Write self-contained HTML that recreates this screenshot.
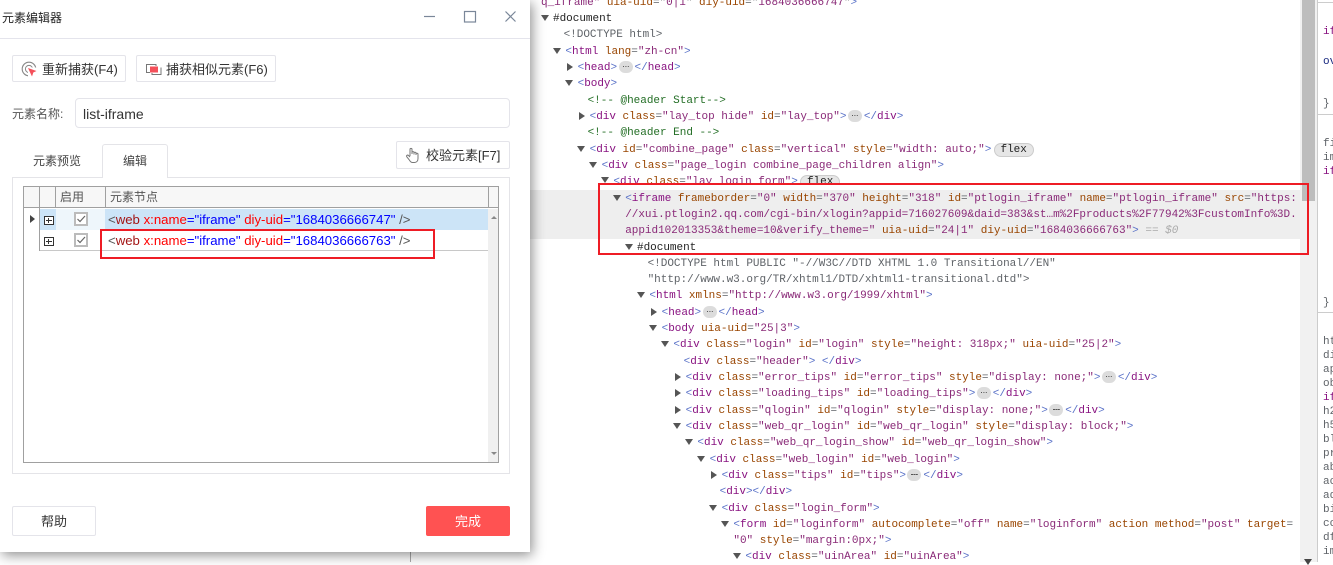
<!DOCTYPE html>
<html lang="zh-CN"><head><meta charset="utf-8"><title>元素编辑器</title>
<style>
html,body{margin:0;padding:0;background:#fff}
body{position:relative;width:1333px;height:562px;overflow:hidden;font-family:"Liberation Sans","Noto Sans CJK SC",sans-serif;color:#333}
.a{position:absolute;box-sizing:border-box}
.m{position:absolute;margin-top:1px;font:11px/16px "Liberation Mono",monospace;letter-spacing:-.018px;white-space:pre;color:#5f6368}
.m i{font-style:normal;color:#5a72c8}
.m b{font-weight:normal;color:#881280}
.m u{text-decoration:none;color:#994500}
.m s{text-decoration:none;color:#8a2a78}
.m em{font-style:normal;color:#236e25}
.p{display:inline-block;width:14px;height:12px;margin:0 2px 0 1.4px;border-radius:6px;background:#dcdcdc;border:0;vertical-align:-3px;position:relative}
.p:after{content:"";position:absolute;left:4px;top:5px;width:1.4px;height:1.4px;background:#555;box-shadow:2.4px 0 #555,4.8px 0 #555}
.f{display:inline-block;width:40px;height:14px;line-height:13px;margin-left:2.4px;border-radius:7px;background:#e6e6e6;border:1px solid #ccc;box-sizing:border-box;text-align:center;color:#222;vertical-align:0}
.d{position:absolute;width:0;height:0;border-left:4px solid transparent;border-right:4px solid transparent;border-top:6px solid #555}
.r{position:absolute;width:0;height:0;border-top:4px solid transparent;border-bottom:4px solid transparent;border-left:6px solid #555}
.t{position:absolute;white-space:nowrap;line-height:18px}
.btn{position:absolute;box-sizing:border-box;background:#fff;border:1px solid #e4e4ea;border-radius:2px}
.rt{position:absolute;margin-top:1px;left:1323px;font:11px/14px "Liberation Mono",monospace;color:#5f6368;white-space:pre}
.c{position:absolute;left:74px;width:14px;height:14px;border:2px solid #bbb;box-sizing:border-box;background:#fff}
.e{position:absolute;left:44px;width:10px;height:9px;box-sizing:border-box;border:1px solid #333;background:#fff}
.e:before{content:"";position:absolute;left:1px;right:1px;top:3px;height:1px;background:#333}
.e:after{content:"";position:absolute;top:1px;bottom:1px;left:3px;width:1px;background:#333}
.x{position:absolute;left:108px;font-size:13.2px;line-height:18px;white-space:pre;color:#555}
.x b{font-weight:normal;color:#a31515}.x u{text-decoration:none;color:#f00}.x s{text-decoration:none;color:#00f}
</style></head><body>

<div class="a" style="left:530px;top:190px;width:770px;height:49px;background:#eee"></div>

<div class="m" style="left:541px;top:-6px"><s>q_iframe"</s> <u>uia-uid</u>="<s>0|1</s>" <u>diy-uid</u>="<s>1684036666747</s>"<i>&gt;</i></div>
<div class="m" style="left:553px;top:10px;color:#222">#document</div>
<div class="m" style="left:563.6px;top:26px">&lt;!DOCTYPE html&gt;</div>
<div class="m" style="left:565.4px;top:43px"><i>&lt;</i><b>html</b> <u>lang</u>=<s>"zh-cn"</s><i>&gt;</i></div>
<div class="m" style="left:577.6px;top:59px"><i>&lt;</i><b>head</b><i>&gt;</i><span class="p"></span><i>&lt;/</i><b>head</b><i>&gt;</i></div>
<div class="m" style="left:577.6px;top:75px"><i>&lt;</i><b>body</b><i>&gt;</i></div>
<div class="m" style="left:587.6px;top:92px"><em>&lt;!-- @header Start--&gt;</em></div>
<div class="m" style="left:589.6px;top:108px"><i>&lt;</i><b>div</b> <u>class</u>=<s>"lay_top hide"</s> <u>id</u>=<s>"lay_top"</s><i>&gt;</i><span class="p"></span><i>&lt;/</i><b>div</b><i>&gt;</i></div>
<div class="m" style="left:587.6px;top:124px"><em>&lt;!-- @header End --&gt;</em></div>
<div class="m" style="left:589.6px;top:141px"><i>&lt;</i><b>div</b> <u>id</u>=<s>"combine_page"</s> <u>class</u>=<s>"vertical"</s> <u>style</u>=<s>"width: auto;"</s><i>&gt;</i><span class="f">flex</span></div>
<div class="m" style="left:601.6px;top:157px"><i>&lt;</i><b>div</b> <u>class</u>=<s>"page_login combine_page_children align"</s><i>&gt;</i></div>
<div class="m" style="left:613.4px;top:173px"><i>&lt;</i><b>div</b> <u>class</u>=<s>"lay_login_form"</s><i>&gt;</i><span class="f">flex</span></div>
<div class="a" style="left:600px;top:184px;width:700px;height:6px;background:#fff"></div>
<div class="m" style="left:625.2px;top:190px"><i>&lt;</i><b>iframe</b> <u>frameborder</u>=<s>"0"</s> <u>width</u>=<s>"370"</s> <u>height</u>=<s>"318"</s> <u>id</u>=<s>"ptlogin_iframe"</s> <u>name</u>=<s>"ptlogin_iframe"</s> <u>src</u>=<s>"https:</s></div>
<div class="m" style="left:625.2px;top:206px"><s>//xui.ptlogin2.qq.com/cgi-bin/xlogin?appid=716027609&amp;daid=383&amp;st…m%2Fproducts%2F77942%3FcustomInfo%3D.</s></div>
<div class="m" style="left:625.2px;top:222px"><s>appid102013353&amp;theme=10&amp;verify_theme="</s> <u>uia-uid</u>=<s>"24|1"</s> <u>diy-uid</u>=<s>"1684036666763"</s><i>&gt;</i> <span style="color:#aaa;font-style:italic">== $0</span></div>
<div class="m" style="left:637px;top:239px;color:#222">#document</div>
<div class="m" style="left:647.6px;top:255px">&lt;!DOCTYPE html PUBLIC "-//W3C//DTD XHTML 1.0 Transitional//EN"</div>
<div class="m" style="left:647.6px;top:271px">"http://www.w3.org/TR/xhtml1/DTD/xhtml1-transitional.dtd"&gt;</div>
<div class="m" style="left:649.4px;top:287px"><i>&lt;</i><b>html</b> <u>xmlns</u>=<s>"http://www.w3.org/1999/xhtml"</s><i>&gt;</i></div>
<div class="m" style="left:661.6px;top:304px"><i>&lt;</i><b>head</b><i>&gt;</i><span class="p"></span><i>&lt;/</i><b>head</b><i>&gt;</i></div>
<div class="m" style="left:661.6px;top:320px"><i>&lt;</i><b>body</b> <u>uia-uid</u>=<s>"25|3"</s><i>&gt;</i></div>
<div class="m" style="left:673.4px;top:336px"><i>&lt;</i><b>div</b> <u>class</u>=<s>"login"</s> <u>id</u>=<s>"login"</s> <u>style</u>=<s>"height: 318px;"</s> <u>uia-uid</u>=<s>"25|2"</s><i>&gt;</i></div>
<div class="m" style="left:683.6px;top:353px"><i>&lt;</i><b>div</b> <u>class</u>=<s>"header"</s><i>&gt;</i> <i>&lt;/</i><b>div</b><i>&gt;</i></div>
<div class="m" style="left:685.6px;top:369px"><i>&lt;</i><b>div</b> <u>class</u>=<s>"error_tips"</s> <u>id</u>=<s>"error_tips"</s> <u>style</u>=<s>"display: none;"</s><i>&gt;</i><span class="p"></span><i>&lt;/</i><b>div</b><i>&gt;</i></div>
<div class="m" style="left:685.6px;top:385px"><i>&lt;</i><b>div</b> <u>class</u>=<s>"loading_tips"</s> <u>id</u>=<s>"loading_tips"</s><i>&gt;</i><span class="p"></span><i>&lt;/</i><b>div</b><i>&gt;</i></div>
<div class="m" style="left:685.6px;top:402px"><i>&lt;</i><b>div</b> <u>class</u>=<s>"qlogin"</s> <u>id</u>=<s>"qlogin"</s> <u>style</u>=<s>"display: none;"</s><i>&gt;</i><span class="p"></span><i>&lt;/</i><b>div</b><i>&gt;</i></div>
<div class="m" style="left:685.6px;top:418px"><i>&lt;</i><b>div</b> <u>class</u>=<s>"web_qr_login"</s> <u>id</u>=<s>"web_qr_login"</s> <u>style</u>=<s>"display: block;"</s><i>&gt;</i></div>
<div class="m" style="left:697.4px;top:434px"><i>&lt;</i><b>div</b> <u>class</u>=<s>"web_qr_login_show"</s> <u>id</u>=<s>"web_qr_login_show"</s><i>&gt;</i></div>
<div class="m" style="left:709.6px;top:451px"><i>&lt;</i><b>div</b> <u>class</u>=<s>"web_login"</s> <u>id</u>=<s>"web_login"</s><i>&gt;</i></div>
<div class="m" style="left:721.6px;top:467px"><i>&lt;</i><b>div</b> <u>class</u>=<s>"tips"</s> <u>id</u>=<s>"tips"</s><i>&gt;</i><span class="p"></span><i>&lt;/</i><b>div</b><i>&gt;</i></div>
<div class="m" style="left:719.6px;top:483px"><i>&lt;</i><b>div</b><i>&gt;&lt;/</i><b>div</b><i>&gt;</i></div>
<div class="m" style="left:721.6px;top:500px"><i>&lt;</i><b>div</b> <u>class</u>=<s>"login_form"</s><i>&gt;</i></div>
<div class="m" style="left:733.4px;top:516px"><i>&lt;</i><b>form</b> <u>id</u>=<s>"loginform"</s> <u>autocomplete</u>=<s>"off"</s> <u>name</u>=<s>"loginform"</s> <u>action</u> <u>method</u>=<s>"post"</s> <u>target</u>=</div>
<div class="m" style="left:733.4px;top:532px"><s>"0"</s> <u>style</u>=<s>"margin:0px;"</s><i>&gt;</i></div>
<div class="m" style="left:745.4px;top:548px"><i>&lt;</i><b>div</b> <u>class</u>=<s>"uinArea"</s> <u>id</u>=<s>"uinArea"</s><i>&gt;</i></div>

<div class="d" style="left:541px;top:15px"></div>
<div class="d" style="left:553px;top:48px"></div>
<div class="d" style="left:565px;top:80px"></div>
<div class="d" style="left:577px;top:146px"></div>
<div class="d" style="left:589px;top:162px"></div>
<div class="a" style="left:601px;top:177px;width:0;height:0;border-left:4px solid transparent;border-right:4px solid transparent;border-top:6px solid #555"></div>
<div class="d" style="left:613px;top:195px"></div>
<div class="d" style="left:625px;top:244px"></div>
<div class="d" style="left:637px;top:292px"></div>
<div class="d" style="left:649px;top:325px"></div>
<div class="d" style="left:661px;top:341px"></div>
<div class="d" style="left:673px;top:423px"></div>
<div class="d" style="left:685px;top:439px"></div>
<div class="d" style="left:697px;top:456px"></div>
<div class="d" style="left:709px;top:505px"></div>
<div class="d" style="left:721px;top:521px"></div>
<div class="d" style="left:733px;top:553px"></div>
<div class="r" style="left:567px;top:63px"></div>
<div class="r" style="left:579px;top:112px"></div>
<div class="r" style="left:651px;top:308px"></div>
<div class="r" style="left:675px;top:373px"></div>
<div class="r" style="left:675px;top:389px"></div>
<div class="r" style="left:675px;top:406px"></div>
<div class="r" style="left:711px;top:471px"></div>

<div class="a" style="left:1300px;top:0;width:17px;height:562px;background:#f1f1f1"></div>
<div class="a" style="left:1302px;top:0;width:13px;height:201px;background:#bdbdbd"></div>
<div class="d" style="left:1304px;top:559px;border-top-color:#444"></div>
<div class="a" style="left:1317px;top:0;width:1px;height:562px;background:#ccc"></div>
<div class="a" style="left:1318px;top:2px;width:15px;height:1px;background:#ccc"></div>
<div class="a" style="left:1318px;top:114px;width:15px;height:1px;background:#ccc"></div>
<div class="a" style="left:1318px;top:312px;width:15px;height:1px;background:#ccc"></div>
<div class="rt" style="top:24px;color:#881280">iframe</div>
<div class="rt" style="top:54px;color:#1a2a80">overflow</div>
<div class="rt" style="top:96px">}</div>
<div class="rt" style="top:136px">figure</div>
<div class="rt" style="top:150px">img</div>
<div class="rt" style="top:164px;color:#881280">iframe</div>
<div class="rt" style="top:295px">}</div>
<div class="rt" style="top:334px">html</div>
<div class="rt" style="top:348px">div</div>
<div class="rt" style="top:362px">applet</div>
<div class="rt" style="top:376px">object</div>
<div class="rt" style="top:390px;color:#881280">iframe</div>
<div class="rt" style="top:404px">h2</div>
<div class="rt" style="top:418px">h5</div>
<div class="rt" style="top:432px">blockquote</div>
<div class="rt" style="top:446px">pre</div>
<div class="rt" style="top:460px">abbr</div>
<div class="rt" style="top:474px">acronym</div>
<div class="rt" style="top:488px">address</div>
<div class="rt" style="top:502px">big</div>
<div class="rt" style="top:516px">code</div>
<div class="rt" style="top:530px">dfn</div>
<div class="rt" style="top:544px">img</div>

<div class="a" style="left:598px;top:183px;width:711px;height:72px;border:2px solid #ee1c25"></div>
<div class="a" style="left:410px;top:550px;width:1px;height:12px;background:#aaa"></div>

<!-- dialog -->
<div class="a" style="left:0;top:0;width:530px;height:552px;background:#fff;box-shadow:2px 3px 12px rgba(0,0,0,.45)">
<div class="t" style="left:2px;top:9px;font-size:12px;color:#222">元素编辑器</div>
<div class="a" style="left:0;top:38px;width:530px;height:1px;background:#e4e4ec"></div>
<svg class="a" style="left:420px;top:5px" width="100" height="22" fill="none" stroke="#7a8799" stroke-width="1.2"><path d="M4 11.5H15"/><rect x="44.5" y="6.5" width="11" height="10.5"/><path d="M85.500 6.500L95.500 16.500M95.500 6.500L85.500 16.500"/></svg>

<div class="btn" style="left:12px;top:55px;width:114px;height:27px"></div>
<svg class="a" style="left:21px;top:61px" width="17" height="17" fill="none"><circle cx="8" cy="8" r="6.800" stroke="#888" stroke-width="1.100"/><circle cx="8" cy="8" r="3.600" stroke="#888" stroke-width="1"/><path d="M7 6.500H17V17H7Z" fill="#fff"/><path d="M7 7L15.500 10L12.300 11.500L11 15.500Z" fill="#f4505a"/></svg>
<div class="t" style="left:42px;top:61px;font-size:13px">重新捕获(F4)</div>
<div class="btn" style="left:136px;top:55px;width:140px;height:27px"></div>
<svg class="a" style="left:145px;top:62px" width="17" height="15" fill="none"><path d="M5 10.500H1.500V2.500H11V4" stroke="#777" stroke-width="1"/><path d="M16 5.500V12.500H7V11" stroke="#777" stroke-width="1"/><rect x="5" y="4.500" width="8" height="6" fill="#f4505a"/></svg>
<div class="t" style="left:166px;top:61px;font-size:13px">捕获相似元素(F6)</div>

<div class="t" style="left:12px;top:105px;font-size:12px;color:#555">元素名称:</div>
<div class="btn" style="left:75px;top:98px;width:435px;height:30px;border-radius:4px"></div>
<div class="t" style="left:83px;top:105px;font-size:14px;color:#333">list-iframe</div>

<div class="t" style="left:33px;top:152px;font-size:12px;color:#444">元素预览</div>
<div class="a" style="left:12px;top:177px;width:498px;height:297px;border:1px solid #e4e4e8"></div>
<div class="a" style="left:102px;top:144px;width:66px;height:34px;background:#fff;border:1px solid #e4e4e8;border-bottom:0;border-radius:3px 3px 0 0"></div>
<div class="t" style="left:123px;top:152px;font-size:12px;color:#444">编辑</div>
<div class="btn" style="left:396px;top:141px;width:114px;height:28px"></div>
<svg class="a" style="left:405px;top:147px" width="16" height="17" fill="none" stroke="#777" stroke-width="1"><path d="M5 9V2.500C5 1 7 1 7 2.500V7M7 7V5.500C7 4.300 9 4.300 9 5.500V7.500M9 7V6C9 5 11 5 11 6V8M11 7C11 6 13 6 13 7.200V11.500C13 14 11.500 15.500 9.500 15.500H7.500C5.500 15.500 5 14 4 12.500L1.800 9.800C1 8.600 2.500 7.500 3.500 8.500L5 10"/></svg>
<div class="t" style="left:426px;top:147px;font-size:13px">校验元素[F7]</div>

<!-- grid -->
<div class="a" style="left:23px;top:186px;width:476px;height:277px;border:1px solid #a0a0a0;background:#fff"></div>
<div class="a" style="left:24px;top:187px;width:474px;height:21px;background:#f7f7f7;border-bottom:1px solid #a0a0a0"></div>
<div class="a" style="left:39px;top:187px;width:1px;height:64px;background:#a0a0a0"></div>
<div class="a" style="left:55px;top:187px;width:1px;height:21px;background:#a0a0a0"></div>
<div class="a" style="left:105px;top:187px;width:1px;height:21px;background:#a0a0a0"></div>
<div class="a" style="left:488px;top:187px;width:1px;height:21px;background:#a0a0a0"></div>
<div class="a" style="left:488px;top:209px;width:10px;height:253px;background:#f0f0f0"></div>
<div class="a" style="left:491px;top:216px;width:0;height:0;border-left:3px solid transparent;border-right:3px solid transparent;border-bottom:3px solid #888"></div>
<div class="a" style="left:491px;top:452px;width:0;height:0;border-left:3px solid transparent;border-right:3px solid transparent;border-top:3px solid #888"></div>
<div class="t" style="left:60px;top:188px;font-size:12px;color:#555">启用</div>
<div class="t" style="left:110px;top:188px;font-size:12px;color:#555">元素节点</div>
<div class="a" style="left:40px;top:209px;width:16px;height:21px;background:#cce4f7"></div>
<div class="a" style="left:56px;top:209px;width:49px;height:21px;background:#eef6fb"></div>
<div class="a" style="left:105px;top:209px;width:383px;height:21px;background:#cce4f7"></div>
<div class="a" style="left:40px;top:250px;width:448px;height:1px;background:#c8c8c8"></div>
<div class="r" style="left:30px;top:215px;border-left:5px solid #444"></div>
<div class="e" style="top:216px"></div>
<div class="e" style="top:237px"></div>
<div class="c" style="top:212px"><svg width="10" height="10" fill="none" stroke="#666" stroke-width="1.200" style="display:block"><path d="M1.500 5L4 7.500L9 2"/></svg></div>
<div class="c" style="top:233px"><svg width="10" height="10" fill="none" stroke="#666" stroke-width="1.200" style="display:block"><path d="M1.500 5L4 7.500L9 2"/></svg></div>
<div class="x" style="top:211px">&lt;<b>web</b> <u>x:name</u><s>="iframe"</s> <u>diy-uid</u><s>="1684036666747"</s> /&gt;</div>
<div class="x" style="top:232px">&lt;<b>web</b> <u>x:name</u><s>="iframe"</s> <u>diy-uid</u><s>="1684036666763"</s> /&gt;</div>
<div class="a" style="left:100px;top:229px;width:335px;height:30px;border:2px solid #ee1c25"></div>

<div class="btn" style="left:12px;top:506px;width:84px;height:30px"></div>
<div class="t" style="left:41px;top:513px;font-size:13px">帮助</div>
<div class="a" style="left:426px;top:506px;width:84px;height:30px;background:#ff5252;border-radius:2px"></div>
<div class="t" style="left:455px;top:513px;font-size:13px;color:#fff">完成</div>
</div>
</body></html>
